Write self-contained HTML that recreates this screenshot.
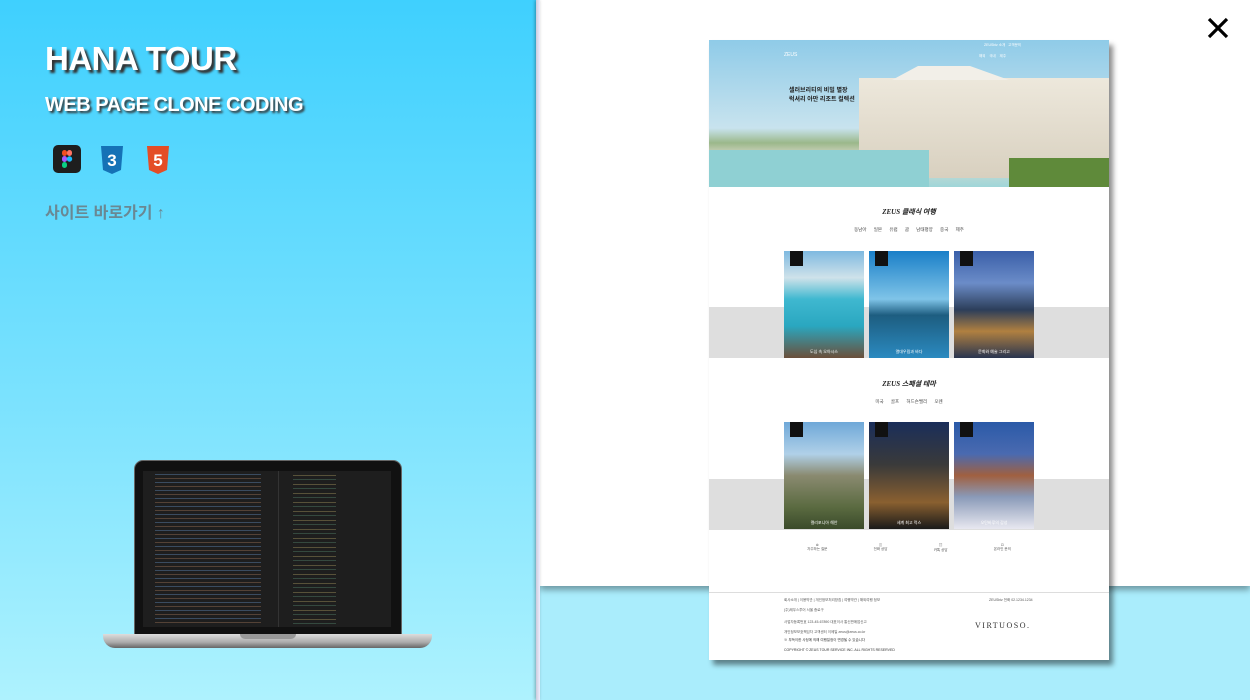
<!DOCTYPE html>
<html><head><meta charset="utf-8"><style>
*{margin:0;padding:0;box-sizing:border-box}
body{width:1250px;height:700px;overflow:hidden;position:relative;font-family:"Liberation Sans","Noto Sans CJK KR",sans-serif;background:#aaedfc}
.left{position:absolute;left:0;top:0;width:538px;height:700px;background:linear-gradient(180deg,#3fd0fe 0%,#7ee3fe 60%,#aef2fe 100%)}
.rwhite{position:absolute;left:540px;top:0;width:710px;height:586px;background:#fff;box-shadow:0 4px 6px rgba(0,0,0,.35)}
.sep{position:absolute;left:536px;top:0;width:4px;height:700px;background:linear-gradient(90deg,#ccd,#eef);box-shadow:-1px 0 3px rgba(0,0,0,.3)}
h1{position:absolute;left:45px;top:40px;color:#fff;font-size:33px;font-weight:bold;text-shadow:3px 3px 2px #333;letter-spacing:-.5px}
h2{position:absolute;left:45px;top:94px;color:#fff;font-size:20px;font-weight:bold;text-shadow:2px 2px 2px #333;letter-spacing:-.5px}
.link{position:absolute;left:45px;top:199px;color:#6a8893;font-size:16px;font-weight:bold}
.m{position:absolute;left:709px;top:40px;width:400px;height:620px;background:#fff;box-shadow:4px 5px 5px rgba(0,0,0,.45);overflow:hidden}
.hero{position:absolute;left:0;top:0;width:400px;height:147px;background:linear-gradient(180deg,#8fcbe8 0%,#c8e3ee 60%,#9bb88a 70%,#e0dcd0 80%,#9fd6d8 100%)}
.band{position:absolute;left:0;width:400px;height:51px;background:#dedede}
.card{position:absolute;width:80px;height:107px}
.tag{position:absolute;left:6px;top:0;width:13px;height:15px;background:#111}
.ct{position:absolute;bottom:3px;left:0;width:100%;text-align:center;color:#fff;font-size:4px}
.t{position:absolute;width:400px;text-align:center;font-family:"Liberation Serif",serif;font-style:italic;font-weight:bold;font-size:7px;color:#222}
.mn{position:absolute;width:400px;text-align:center;font-size:4.5px;color:#444;word-spacing:6px}
.tiny{position:absolute;font-size:3.5px;color:#555}
</style></head><body>
<div class="left"></div>
<div class="rwhite"></div>
<div class="sep"></div>
<h1>HANA TOUR</h1>
<h2>WEB PAGE CLONE CODING</h2>
<svg style="position:absolute;left:53px;top:145px" width="28" height="28"><rect width="28" height="28" rx="5" fill="#1e1e1e"/><rect x="9" y="5" width="5" height="6" rx="2.5" fill="#f24e1e"/><rect x="14" y="5" width="5" height="6" rx="2.5" fill="#ff7262"/><rect x="9" y="11" width="5" height="6" rx="2.5" fill="#a259ff"/><circle cx="16.5" cy="14" r="2.7" fill="#1abcfe"/><rect x="9" y="17" width="5" height="6" rx="2.5" fill="#0acf83"/></svg>
<svg style="position:absolute;left:99px;top:145px" width="26" height="30"><path d="M2 1h22l-2 24-9 4-9-4z" fill="#1572b6"/><text x="13" y="21" font-size="17" fill="#fff" text-anchor="middle" font-weight="bold" font-family="Liberation Sans">3</text></svg>
<svg style="position:absolute;left:145px;top:145px" width="26" height="30"><path d="M2 1h22l-2 24-9 4-9-4z" fill="#e44d26"/><text x="13" y="21" font-size="17" fill="#fff" text-anchor="middle" font-weight="bold" font-family="Liberation Sans">5</text></svg>
<div class="link">사이트 바로가기 ↑</div>
<!-- laptop -->
<div style="position:absolute;left:134px;top:460px;width:268px;height:176px;background:#111;border-radius:9px 9px 0 0;border:1px solid #666"></div>
<div style="position:absolute;left:143px;top:471px;width:248px;height:156px;background:#1e1e1e"></div>
<div style="position:absolute;left:143px;top:471px;width:248px;height:156px;background:repeating-linear-gradient(180deg,transparent 0 3px,rgba(110,160,220,.35) 3px 4px,transparent 4px 7px,rgba(210,150,110,.3) 7px 8px);clip-path:inset(3px 130px 3px 12px)"></div>
<div style="position:absolute;left:278px;top:471px;width:1px;height:156px;background:#333"></div>
<div style="position:absolute;left:285px;top:471px;width:106px;height:156px;background:repeating-linear-gradient(180deg,transparent 0 4px,rgba(220,200,120,.3) 4px 5px,transparent 5px 8px,rgba(120,200,160,.25) 8px 9px);clip-path:inset(3px 55px 3px 8px)"></div>
<div style="position:absolute;left:103px;top:634px;width:329px;height:14px;background:linear-gradient(180deg,#ddd,#aaa 60%,#666);border-radius:0 0 12px 12px"></div>
<div style="position:absolute;left:240px;top:634px;width:56px;height:5px;background:#999;border-radius:0 0 5px 5px"></div>
<svg style="position:absolute;left:1207px;top:17px" width="22" height="22"><path d="M2 2L20 20M20 2L2 20" stroke="#000" stroke-width="3.2"/></svg>
<!-- mockup -->
<div class="m">
 <div class="hero">
  <div style="position:absolute;left:150px;top:38px;width:250px;height:100px;background:linear-gradient(180deg,#ede8dc,#d8d0bf)"></div>
  <div style="position:absolute;left:170px;top:26px;width:130px;height:14px;background:#f2efe8;clip-path:polygon(10% 100%,30% 0,70% 0,100% 100%)"></div>
  <div style="position:absolute;left:0;top:110px;width:220px;height:37px;background:#8fd0d3"></div>
  <div style="position:absolute;left:300px;top:118px;width:100px;height:29px;background:#5f8a3a"></div>
  <div style="position:absolute;left:80px;top:47px;font-size:6px;font-weight:bold;color:#222;line-height:9px">셀러브리티의 비밀 별장<br>럭셔리 아만 리조트 컬렉션</div>
  <div style="position:absolute;left:75px;top:12px;font-size:5px;color:#fff">ZEUS</div>
  <div class="tiny" style="left:275px;top:3px;color:#fff">ZEUSbiz 소개 &nbsp; 고객문의</div>
  <div class="tiny" style="left:270px;top:14px;color:#fff">해외 &nbsp;&nbsp; 국내 &nbsp;&nbsp; 제주</div>
 </div>
 <div class="t" style="top:167px">ZEUS 클래식 여행</div>
 <div class="mn" style="top:187px">동남아 일본 유럽 괌 남태평양 중국 제주</div>
 <div class="band" style="top:267px"></div>
 <div class="card" style="left:75px;top:211px;background:linear-gradient(180deg,#7fb9e0 0%,#cfe2ea 25%,#3fb8d0 45%,#2aa7c0 70%,#6b4f3a 100%)"><div class="tag"></div><div class="ct">도심 속 오아시스</div></div>
 <div class="card" style="left:160px;top:211px;background:linear-gradient(180deg,#1a7fc8 0%,#7fc4e8 45%,#1d5d80 60%,#2b8ac0 100%)"><div class="tag"></div><div class="ct">열대우림과 바다</div></div>
 <div class="card" style="left:245px;top:211px;background:linear-gradient(180deg,#3a5fa8 0%,#6b8cc8 30%,#2c3e5a 55%,#b08040 75%,#2a3550 100%)"><div class="tag"></div><div class="ct">문화와 예술 그리고</div></div>
 <div class="t" style="top:339px">ZEUS 스페셜 테마</div>
 <div class="mn" style="top:359px">미국 골프 허드슨밸리 오렌</div>
 <div class="band" style="top:439px"></div>
 <div class="card" style="left:75px;top:382px;background:linear-gradient(180deg,#6fa8d8 0%,#b0d0e8 30%,#8a8a70 50%,#5a6a40 80%,#3a4a2a 100%)"><div class="tag"></div><div class="ct">캘리포니아 해안</div></div>
 <div class="card" style="left:160px;top:382px;background:linear-gradient(180deg,#1a2e5a 0%,#3a3a3a 40%,#8a6030 75%,#1a1a1a 100%)"><div class="tag"></div><div class="ct">세계 최고 럭스</div></div>
 <div class="card" style="left:245px;top:382px;background:linear-gradient(180deg,#2a5aa8 0%,#4a6ab0 30%,#a06040 50%,#8a9ab8 70%,#e8e8f0 100%)"><div class="tag"></div><div class="ct">오탄바루의 감성</div></div>
 <div class="tiny" style="left:75px;top:503px;width:250px;display:flex;justify-content:space-around;text-align:center"><span>⊛<br>자주하는 질문</span><span>◫<br>전화 상담</span><span>▤<br>카톡 상담</span><span>⊡<br>온라인 문의</span></div>
 <div style="position:absolute;left:0;top:552px;width:400px;height:1px;background:#ddd"></div>
 <div class="tiny" style="left:75px;top:558px">회사소개 | 이용약관 | 개인정보처리방침 | 여행약관 | 해외여행 정보</div>
 <div class="tiny" style="left:280px;top:558px">ZEUSbiz 전화 02.1234.1234</div>
 <div class="tiny" style="left:75px;top:568px">(주)제우스투어 서울 종로구</div>
 <div class="tiny" style="left:75px;top:580px">사업자등록번호 123-45-67890 대표이사 통신판매업신고</div>
 <div class="tiny" style="left:75px;top:590px">개인정보보호책임자 고객센터 이메일 zeus@zeus.co.kr</div>
 <div class="tiny" style="left:75px;top:598px;color:#333">※ 부득이한 사정에 의해 여행일정이 변경될 수 있습니다</div>
 <div class="tiny" style="left:75px;top:608px;color:#333">COPYRIGHT © ZEUS TOUR SERVICE INC. ALL RIGHTS RESERVED</div>
 <div style="position:absolute;left:266px;top:581px;font-family:'Liberation Serif',serif;font-size:8px;color:#333;letter-spacing:1.5px">VIRTUOSO.</div>
</div>
</body></html>
